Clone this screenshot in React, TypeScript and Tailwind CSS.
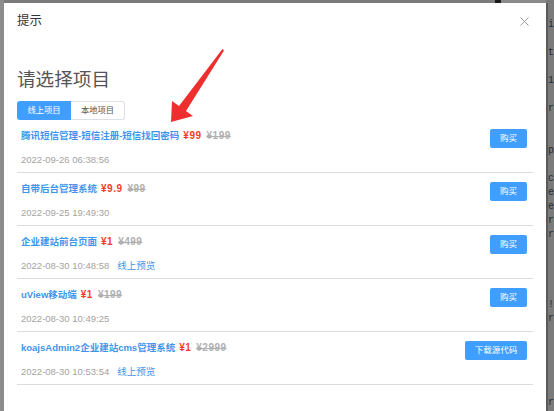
import React from "react";

const FONT = '"Liberation Sans", "Noto Sans CJK SC", Arial, sans-serif';

type Item = {
  title: string;
  price: string;
  orig: string;
  date: string;
  preview?: boolean;
  action: string;
};

const items: Item[] = [
  { title: "腾讯短信管理-短信注册-短信找回密码", price: "¥99", orig: "¥199", date: "2022-09-26 06:38:56", action: "购买" },
  { title: "自带后台管理系统", price: "¥9.9", orig: "¥99", date: "2022-09-25 19:49:30", action: "购买" },
  { title: "企业建站前台页面", price: "¥1", orig: "¥499", date: "2022-08-30 10:48:58", preview: true, action: "购买" },
  { title: "uView移动端", price: "¥1", orig: "¥199", date: "2022-08-30 10:49:25", action: "购买" },
  { title: "koajsAdmin2企业建站cms管理系统", price: "¥1", orig: "¥2999", date: "2022-08-30 10:53:54", preview: true, action: "下载源代码" },
];

const bgLines = [
  "ie", "", "t", "", "1", "", "r", "", "", "p", "", "c", "e", "e", "r", "r",
  "", "", "", "", "!", "r", "", "", "", "", "", "r",
];

function Row({ it }: { it: Item }) {
  return (
    <div className="flex items-start justify-between border-b border-[#dcdcdc] pl-[4px] pr-[6px] pt-[9px] pb-[5px]">
      <div className="flex flex-col">
        <div className="flex h-[14px] items-center text-[9.5px] font-bold leading-[14px]">
          <span className="text-[#3d95ee]">{it.title}</span>
          <span className="ml-[4px] text-[10px] tracking-[0.5px] text-[#f53b2a]">{it.price}</span>
          <span className="ml-[5px] text-[10px] tracking-[0.5px] text-[#b0b0b0] line-through">{it.orig}</span>
        </div>
        <div className="mt-[10px] flex h-[14px] items-center text-[9.5px] leading-[14px] text-[#a3a3a3]">
          <span>{it.date}</span>
          {it.preview && <span className="ml-[8px] text-[#3d95ee]">线上预览</span>}
        </div>
      </div>
      <button
        className={`flex h-[19px] items-center justify-center rounded-[2px] bg-[#409eff] text-[8.5px] text-white ${
          it.action === "购买" ? "w-[37px]" : "w-[62px]"
        }`}
      >
        {it.action}
      </button>
    </div>
  );
}

export default function App() {
  return (
    <div
      className="relative flex h-[411px] w-[554px] overflow-hidden bg-[#7b7b7b]"
      style={{ fontFamily: FONT }}
    >
      {/* left strip of page behind */}
      <div className="h-full w-[4px] shrink-0 bg-[#8c8c8c]" />

      {/* dialog */}
      <div className="mt-[3px] flex h-[408px] w-[542px] shrink-0 flex-col bg-white px-[13px] pt-[10px]">
        <div className="flex h-[17px] items-center justify-between">
          <span className="text-[12.5px] leading-[17px] text-[#333]">提示</span>
          <svg width="9" height="9" viewBox="0 0 9 9" className="mr-[4px]">
            <path d="M0.5 0.5 L8.5 8.5 M8.5 0.5 L0.5 8.5" stroke="#9a9a9a" strokeWidth="1" />
          </svg>
        </div>
        <div className="mt-[38px] h-[24px] text-[18.6px] leading-[24px] text-[#555]">请选择项目</div>
        <div className="mt-[9px] flex h-[19px]">
          <div className="flex w-[54px] items-center justify-center rounded-l-[3px] bg-[#409eff] text-[8.3px] text-white">
            线上项目
          </div>
          <div className="flex w-[54px] items-center justify-center rounded-r-[3px] border border-l-0 border-[#dcdfe6] text-[8.3px] text-[#555]">
            本地项目
          </div>
        </div>
        <div className="flex flex-col">
          {items.map((it) => (
            <Row key={it.title} it={it} />
          ))}
        </div>
      </div>

      {/* right side of page behind */}
      <div className="flex h-full flex-1 flex-col">
        <div className="flex h-[3px] shrink-0">
          <div className="ml-[-51px] h-[3px] w-[6px] bg-[#1a1a1a]" />
          <div className="h-[3px] w-[45px] bg-[#8a8a8a]" />
        </div>
        <div className="flex flex-1">
          <div className="h-full w-[2px] bg-[#5a5a5a]" />
          <div className="flex flex-col pt-[15px] font-mono text-[10px] leading-[14px] text-[#2a2a2a]">
            {bgLines.map((l, i) => (
              <div key={i} className="h-[14px] whitespace-nowrap">
                {l}
              </div>
            ))}
          </div>
        </div>
      </div>

      {/* red annotation arrow */}
      <svg className="pointer-events-none absolute left-0 top-0" width="554" height="411">
        <polygon
          points="171,122 172,101 179,106 222.5,49 224,50.5 186,111 193,116"
          fill="#ee2f2f"
        />
      </svg>
    </div>
  );
}
